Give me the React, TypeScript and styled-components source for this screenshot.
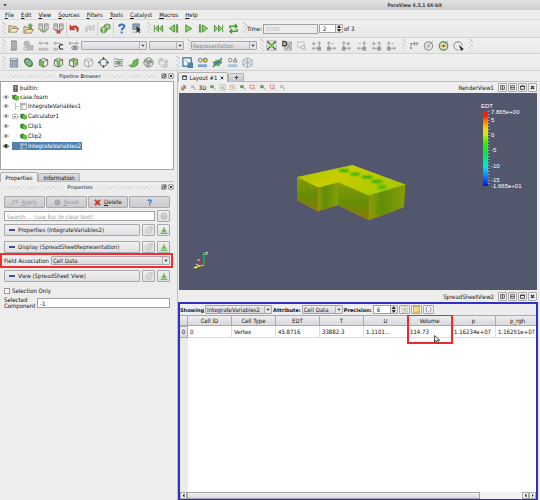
import React from 'react';
import styled, { createGlobalStyle, css } from 'styled-components';

const GlobalStyle = createGlobalStyle`
  *, *::before, *::after { box-sizing: border-box; }
  body { margin: 0; background: #ededed; }
  button, input, select { font: inherit; color: inherit; margin: 0; padding: 0; border-radius: 0; }
`;

const Shell = styled.div`
  display: flex;
  flex-direction: column;
  height: 100vh;
  overflow: hidden;
  background: #ededed;
  color: #111;
  font: 6px/8px "DejaVu Sans Condensed", "Open Sans", sans-serif;
`;

/* ---------- window chrome ---------- */
const TitleBar = styled.header`
  display: flex;
  flex: none;
  align-items: center;
  justify-content: flex-end;
  height: 10px;
  padding: 0 98px 0 3px;
  background: linear-gradient(#e2e2e2, #cecece);
  font: 700 5px/8px "DejaVu Sans Condensed", sans-serif;
  color: #444;
`;
const WindowMenu = styled.button`
  width: 4px;
  height: 3px;
  margin-right: auto;
  border: 0;
  background: #444;
  clip-path: polygon(0 0, 100% 0, 50% 100%);
`;
const MenuBar = styled.nav`
  display: flex;
  flex: none;
  align-items: center;
  gap: 7px;
  height: 10px;
  padding-left: 5px;
  border-bottom: 1px solid #d8d8d8;
`;
const MenuItem = styled.button`
  border: 0;
  background: none;
  line-height: 8px;
  &::first-letter { text-decoration: underline; }
`;
const ToolBar = styled.div<{ $h: number }>`
  display: flex;
  flex: none;
  align-items: center;
  height: ${p => p.$h}px;
  padding-left: 2px;
  border-bottom: 1px solid #d2d2d2;
  background: linear-gradient(#f0f0f0, #e9e9e9);
`;
const Grip = styled.span<{ $gap?: number }>`
  flex: none;
  width: 4px;
  height: 13px;
  margin-left: ${p => p.$gap ?? 0}px;
  background: repeating-linear-gradient(45deg, #cfcfcf 0 1px, transparent 1px 3px);
`;
const Separator = styled.span`
  flex: none;
  width: 1px;
  height: 14px;
  background: #cfcfcf;
`;
const ToolButton = styled.button<{ $w?: number }>`
  display: flex;
  flex: none;
  align-items: center;
  justify-content: center;
  width: ${p => p.$w ?? 15}px;
  height: 13px;
  border: 0;
  background: none;
  svg { display: block; }
`;
const TimeGroup = styled.div`
  display: flex;
  align-items: center;
  gap: 1px;
`;
const field = css`
  border: 1px solid #a2a2a2;
  background: #fff;
  line-height: 8px;
`;
const TextBox = styled.input<{ $w?: number }>`
  ${field}
  min-width: 0;
  width: ${p => (p.$w ? p.$w + 'px' : 'auto')};
  flex: ${p => (p.$w ? 'none' : '1')};
  height: 10px;
  padding: 0 2px;
  &::placeholder { color: #999; opacity: 1; }
  &:disabled { background: #eee; color: #bbb; }
`;
const SpinFrame = styled.span<{ $w: number }>`
  display: flex;
  flex: none;
  width: ${p => p.$w}px;
  height: 9px;
  input { flex: 1; min-width: 0; ${field} padding-left: 3px; height: 9px; line-height: 7px; }
`;
const SpinArrows = styled.span`
  display: flex;
  flex: none;
  flex-direction: column;
  gap: 1px;
  width: 7px;
  border: 1px solid #b0b0b0;
  border-left: 0;
  background: #e4e4e4;
`;
const SpinArrow = styled.button<{ $down?: boolean }>`
  width: 4px;
  height: 3px;
  margin: 0 1px;
  border: 0;
  background: #222;
  clip-path: ${p => (p.$down ? 'polygon(0 0, 100% 0, 50% 100%)' : 'polygon(50% 0, 100% 100%, 0 100%)')};
`;
const Combo = styled.span<{ $w?: number; $muted?: boolean }>`
  display: flex;
  flex: ${p => (p.$w ? 'none' : '1')};
  width: ${p => (p.$w ? p.$w + 'px' : 'auto')};
  height: 9px;
  border: 1px solid #a6a6aa;
  border-radius: 1px;
  background: linear-gradient(#ececef, #d9d9de);
  color: ${p => (p.$muted ? '#888' : '#222')};
  select {
    flex: 1;
    min-width: 0;
    appearance: none;
    border: 0;
    padding-left: 1px;
    background: none;
    line-height: 7px;
  }
  svg { flex: none; border-left: 1px solid #b4b4b8; background: #e6e6e8; }
`;

/* ---------- body ---------- */
const Body = styled.main`
  display: flex;
  flex: 1;
  min-height: 0;
`;
const SideDock = styled.aside`
  display: flex;
  flex: none;
  flex-direction: column;
  width: 178px;
  padding-right: 3px;
  border-right: 1px solid #c0c0c0;
`;
const DockTitle = styled.h2`
  display: flex;
  flex: none;
  align-items: center;
  gap: 3px;
  height: 10px;
  margin: 0;
  padding-left: 2px;
  font: 5px/8px "DejaVu Sans", sans-serif;
  &::before, .fill {
    content: "";
    flex: 1;
    height: 3px;
    background: repeating-linear-gradient(135deg, #d8d8d8 0 1px, transparent 1px 3px);
  }
`;
const FrameButtons = styled.span`
  display: flex;
  gap: 1px;
`;
const FrameButton = styled.button<{ $w?: number }>`
  display: flex;
  flex: none;
  align-items: center;
  justify-content: center;
  width: ${p => p.$w ?? 6}px;
  height: ${p => (p.$w ? 9 : 6)}px;
  border: 1px solid #aaa;
  border-radius: 1px;
  background: #f2f2f2;
  svg { display: block; flex: none; }
`;
const Tree = styled.ul`
  flex: none;
  height: 89px;
  margin: 0;
  padding: 0;
  list-style: none;
  border: 1px solid #a4a4a4;
  background: #fff;
`;
const TreeRow = styled.li<{ $depth: number; $selected?: boolean }>`
  display: flex;
  align-items: center;
  height: 10px;
  margin-bottom: ${p => (p.$depth > 0 ? 0 : -1)}px;
  &:first-child { margin-top: 1px; }
  .eye { width: 8px; margin-left: 1px; flex: none; }
  .node {
    display: flex;
    align-items: center;
    gap: 1px;
    height: 8px;
    margin-left: 2px;
    padding-right: 1px;
    ${p => p.$selected && css`background: #4f81b0; color: #fff;`}
  }
`;
const Tabs = styled.div<{ $gap: number }>`
  display: flex;
  flex: none;
  align-items: flex-end;
  height: ${p => p.$gap}px;
  border-bottom: 1px solid #bcbcbc;
`;
const Tab = styled.button<{ $active?: boolean; $w: number }>`
  display: flex;
  align-items: center;
  justify-content: center;
  gap: 2px;
  width: ${p => p.$w}px;
  height: ${p => (p.$active ? 10 : 8)}px;
  margin-bottom: ${p => (p.$active ? -1 : 0)}px;
  border: 1px solid #b0b0b0;
  border-bottom: 0;
  border-radius: 2px 2px 0 0;
  background: ${p => (p.$active ? '#efefef' : 'linear-gradient(#dfdfe2, #c6c6cc)')};
`;
const PropertyPanel = styled.section`
  display: flex;
  flex-direction: column;
  padding: 4px 4px 0;
`;
const PropRow = styled.div<{ $top?: number; $gap?: number }>`
  display: flex;
  align-items: center;
  gap: ${p => p.$gap ?? 2}px;
  margin-top: ${p => p.$top ?? 0}px;
`;
const PushButton = styled.button<{ $dim?: boolean; $icon?: boolean; $section?: boolean }>`
  display: flex;
  flex: ${p => (p.$icon ? 'none' : '1')};
  align-items: center;
  justify-content: ${p => (p.$section ? 'flex-start' : 'center')};
  gap: 3px;
  width: ${p => (p.$icon ? '13px' : 'auto')};
  height: 12px;
  padding: 0 ${p => (p.$section ? 4 : 0)}px;
  border: 1px solid #a9a9ad;
  border-radius: 1px;
  background: ${p => (p.$section || p.$icon ? 'linear-gradient(#f0f0f1, #e0e0e3)' : 'linear-gradient(#dcdce0, #c9c9ce)')};
  color: ${p => (p.$dim ? '#999' : '#222')};
  white-space: nowrap;
  svg { flex: none; }
`;
const Dash = styled.i`
  width: 6px;
  height: 2px;
  background: #3c4f9c;
`;
const FieldHighlight = styled.div`
  display: flex;
  align-items: center;
  gap: 2px;
  height: 15px;
  margin: 0 -3px 0 -4px;
  padding: 0 1px 0 2px;
  border: 2px solid #f03030;
`;
const CheckLabel = styled.label`
  display: flex;
  align-items: center;
  gap: 2px;
  margin-top: 5px;
  input { appearance: none; width: 6px; height: 6px; border: 1px solid #999; background: #fff; }
`;
const ComponentLabel = styled.label`
  width: 31px;
  line-height: 6px;
`;

/* ---------- views ---------- */
const Workspace = styled.section`
  display: flex;
  flex: 1;
  flex-direction: column;
  min-width: 0;
  padding-right: 2px;
`;
const ViewPane = styled.section`
  display: flex;
  flex: 1 1 0;
  flex-direction: column;
  min-height: 0;
`;
const ViewBar = styled.div`
  display: flex;
  flex: none;
  align-items: center;
  height: 11px;
  padding-right: 1px;
  h3 { margin: 0 4px 0 auto; font: inherit; }
`;
const RenderArea = styled.div`
  flex: 1;
  min-height: 0;
  margin: 0 1px 1px;
  background: #52576e;
  svg { display: block; width: 100%; height: 100%; }
`;
const SheetFrame = styled.div`
  display: flex;
  flex: 1;
  flex-direction: column;
  min-height: 0;
  border: 2px solid #3030c4;
  border-bottom-width: 1px;
  background: #fff;
`;
const SheetBar = styled.div`
  display: flex;
  flex: none;
  align-items: center;
  gap: 1px;
  height: 11px;
  background: #ededed;
  label { font: 700 5px/8px "DejaVu Sans", sans-serif; }
`;
const TableArea = styled.div`
  flex: 1;
  min-height: 0;
  overflow: hidden;
  background: linear-gradient(90deg, #ececec 8px, #fff 8px);
`;
const DataTable = styled.table`
  width: 360px;
  table-layout: fixed;
  border-collapse: separate;
  border-spacing: 0;
  th, td { padding: 0; height: 11px; overflow: visible; white-space: nowrap; }
  th {
    position: relative;
    border: solid #aaaab0;
    border-width: 1px 1px 1px 0;
    background: linear-gradient(#eeeef0, #d9d9de);
    font-weight: 400;
    text-align: center;
  }
  td { padding-left: 2px; border: solid #ddd; border-width: 0 1px 1px 0; }
  tbody th, tbody td { height: 12px; }
`;
const Callout = styled.span`
  position: absolute;
  z-index: 1;
  top: -2px;
  left: -1px;
  width: 46px;
  height: 30px;
  border: 2px solid #f02828;
  svg { position: absolute; left: 25px; top: 19px; }
`;
const ScrollBar = styled.div`
  display: flex;
  flex: none;
  height: 7px;
  background: #f3f3f3;
`;
const ScrollArrow = styled.button<{ $right?: boolean }>`
  display: flex;
  align-items: center;
  justify-content: center;
  width: 7px;
  border: 1px solid #aaa;
  background: #efefef;
  &::before {
    content: "";
    width: 2px;
    height: 4px;
    background: #222;
    clip-path: ${p => (p.$right ? 'polygon(0 0, 100% 50%, 0 100%)' : 'polygon(100% 0, 100% 100%, 0 50%)')};
  }
`;
const ScrollTrack = styled.div`
  flex: 1;
  padding-right: 42px;
  span {
    display: block;
    height: 7px;
    border: 1px solid #a5a5a9;
    background: linear-gradient(#f3f3f5, #d8d8dc);
  }
`;

/* ---------- icons ---------- */
const G = '#6fbf45';
const D = '#3b6e28';
const S = '#a8a8a8';
const frame = (d: string) => (
  <g fill="none" stroke={d}>
    <path d="M1.500 3.500 6 1.500l4.500 1.500v5.500L6 11l-4.500-2zM1.500 3.500 6 5l4.500-2M6 5v6" />
  </g>
);
const arrows = (flip: boolean, mark: string) => (
  <g fill="none" stroke="#999" strokeWidth="1">
    <path d={flip ? 'M3 11V2M1.500 4 3 2l1.500 2M3 9h7M8.500 7.500 10.500 9l-2 2' : 'M9 11V2M7.500 4 9 2l1.500 2M9 9H2M3.500 7.500 1.500 9l2 2'} />
    {mark === '-' ? <path d={flip ? 'M6 4h2' : 'M3 4h2'} /> : <path d={flip ? 'M6 4h4M8 2v4' : 'M1 4h4M3 2v4'} />}
    <rect x={flip ? 1.5 : 7.5} y="8" width="3" height="3" fill="#999" />
  </g>
);
const shapes: Record<string, React.ReactNode> = {
  open: <g stroke="#7b6a45" strokeWidth=".8"><path d="M1 10V3h3l1 1h4v2" fill="#e9d9a8" /><path d="M1 10 4 6h7.500L9 10z" fill="#f9efca" /></g>,
  save: <g stroke="#7b6a45" strokeWidth=".8"><path d="M1 11V4h3l1 1h4v2" fill="#e9d9a8" /><path d="M1 11 4 7h7.500L9 11z" fill="#f3e3b0" /><path d="M7 6V3H5.500L8 .5l2.500 2.500H9v3z" fill={G} stroke={D} strokeWidth=".5" /></g>,
  connect: <g fill="#d6ddd0" stroke="#777" strokeWidth=".8"><rect x="1" y="1" width="4" height="6" /><rect x="7" y="1" width="4" height="6" /><path d="M2 3h2M8 3h2M3 7v2h6V7" /><path d="M4 9h4M6 7v4" stroke={G} strokeWidth="1.500" /></g>,
  disconnect: <g fill="#ddd5d0" stroke="#777" strokeWidth=".8"><rect x="1" y="1" width="4" height="6" /><rect x="7" y="1" width="4" height="6" /><path d="M2 3h2M8 3h2M3 7v2h6V7" /><path d="m4 7.500 4 4M8 7.500l-4 4" stroke="#c33" strokeWidth="1.400" /></g>,
  undo: <path d="M1 2v5.500h5.500L4.600 5.800C7 4.300 9 6 8.800 10 12.800 5.500 8.500 1 2.800 4z" fill="#d93a2b" stroke="#9c2016" strokeWidth=".5" />,
  redo: <path d="M11 2v5.500H5.500l1.900-1.700C5 4.300 3 6 3.200 10-.8 5.500 3.500 1 9.200 4z" fill="#ddd" stroke={S} strokeWidth=".7" />,
  cubes: <g fill={G} stroke={D} strokeWidth=".7"><path d="M5 2 8 1l3 1v4L8 7 5 6z" fill="#a4c890" /><path d="M1 5l3-1 3 1v4.500L4 11 1 9.500z" /><path d="m1 5 3 1 3-1M4 6v5" fill="none" stroke="#fff" /></g>,
  help: <g fill="none" stroke="#2676c4" strokeWidth="2.200"><path d="M3.500 4C3.500 .8 9 .8 9 3.800 9 5.800 6.200 5.500 6.200 8" /><path d="M6.200 9.300v2" /></g>,
  probe: <g><rect x="2" y="1" width="7" height="6" fill="#82a9cd" stroke="#666" strokeWidth=".7" /><path d="M6 3v8l1.700-1.600L9 11l1-.5L9 8h2z" fill="#333" /><path d="M2 10h3" stroke="#888" /></g>,
  first: <g fill="#8ad26c" stroke="#3f8a2a" strokeWidth=".9"><path d="M1.500 2v8M6 2.500v7L2.500 6zM10.500 2.500v7L7 6z" /></g>,
  prev: <g fill="#8ad26c" stroke="#3f8a2a" strokeWidth=".9"><path d="M7 2v8L1.500 6zM9 2h1.500v8H9z" /></g>,
  play: <path d="M3 2v8l6.500-4z" fill="#8ad26c" stroke="#3f8a2a" strokeWidth=".9" />,
  next: <g fill="#8ad26c" stroke="#3f8a2a" strokeWidth=".9"><path d="M5 2v8l5.500-4zM1.500 2H3v8H1.500z" /></g>,
  last: <g fill="#8ad26c" stroke="#3f8a2a" strokeWidth=".9"><path d="M10.500 2v8M6 2.500v7L9.500 6zM1.500 2.500v7L5 6z" /></g>,
  loop: <g fill="none" stroke="#4f9c37" strokeWidth="1.600"><path d="M2 6V3.500h7M7.500 1l2.300 2.500L7.500 6M10 6.500V9H3M4.500 6.500 2.200 9l2.300 2.500" /></g>,
  legend: <g><rect x="4" y="1" width="5" height="10" fill="#a5a5a5" stroke="#777" strokeWidth=".7" /><path d="M4 3.500h5M4 6h5M4 8.500h5" stroke="#ccc" strokeWidth=".6" /></g>,
  color: <g fill="#bbb" stroke={S} strokeWidth=".7"><circle cx="4" cy="4" r="3" /><path d="M5 6h6v5H5z" /><path d="M1 8h4v3H1z" fill="#ddd" /></g>,
  range: <g fill="none" stroke="#999"><path d="M1 3.500h10M3 2 1 3.500 3 5M9 2l2 1.500L9 5" /><path d="M1 9h10v2H1z" fill="#ccc" stroke={S} strokeWidth=".6" /></g>,
  rangeC: <g fill="none" stroke="#999"><path d="M1 3.500h8M3 2 1 3.500 3 5" /><path d="M1 9h4v2H1z" fill="#ccc" strokeWidth=".6" /><path d="M11 5.500c-3-1.500-5 1-4 3 .7 1.800 2.500 2 4 1" stroke="#333" strokeWidth="1.300" /></g>,
  rangeEye: <g fill="none" stroke="#999"><path d="M1 3.500h10M3 2 1 3.500 3 5M9 2l2 1.500L9 5" /><ellipse cx="7.500" cy="8.500" rx="3.500" ry="2" stroke="#666" /><circle cx="7.500" cy="8.500" r="1.200" fill="#444" /></g>,
  reset: <g><rect x="1" y="1" width="10" height="10" fill="#dde8d8" stroke="#888" strokeWidth=".6" /><path d="m1.500 1.500 3 3M10.500 1.500l-3 3M1.500 10.500l3-3M10.500 10.500l-3-3" stroke="#333" strokeWidth="1.200" /><rect x="4" y="4" width="4" height="4" fill={G} /></g>,
  zoomD: <g><rect x="4" y="2" width="7.500" height="9" fill="#ccc" stroke="#999" strokeWidth=".6" /><path d="m6 10 5-7M6 4l5 6" stroke="#888" /><path d="M2 1.500v5h1.500c3.500 0 3.500-5 0-5z" fill="none" stroke="#333" strokeWidth="1.300" /></g>,
  zoomBox: <g fill="none" stroke="#aaa"><path d="M2 2h7v5M2 2v6h3" strokeDasharray="1.500 1" /><circle cx="7.500" cy="8" r="2" /><path d="m9 9.500 2 2" /></g>,
  px: arrows(false, '+'), mx: arrows(true, '-'), py: arrows(true, '+'), my: arrows(false, '-'), pz: arrows(false, '+'), mz: arrows(true, '-'),
  axes: <g stroke="#888" fill="none"><path d="M3.500 10V4M2 8l1.500 2M2 4h9M9 2l2 2-2 2M7 2v4" /></g>,
  rotate: <g fill="none" stroke="#999"><circle cx="6" cy="6.500" r="4.500" strokeWidth="1.300" /><circle cx="6" cy="6.500" r="1.500" /><path d="M7 5 11 1" /></g>,
  rotateOn: <g fill="none" stroke="#6e9550"><circle cx="6" cy="6.500" r="4.500" strokeWidth="1.600" /><path d="M3 6.500h6M6 3.500v6" stroke="#d2a52d" strokeWidth="1.500" /><circle cx="6" cy="6.500" r="1" fill="#b33" stroke="none" /><path d="M7.500 4.500 11 1" /></g>,
  pick: <g fill="none" stroke="#999"><path d="M6 11A4.500 4.500 0 1 1 10 6" strokeWidth="1.200" /><path d="m7 6 4.500 4-2 .3-.5 1.500z" fill="#222" stroke="#222" strokeWidth=".5" /></g>,
  calc: <g><rect x="2" y="1" width="9" height="10.500" fill="#8591a0" /><path d="M3 2.500h7" stroke="#dce6f0" strokeWidth="1.500" /><path d="M3 5.500h7M3 7.500h7M3 9.500h7" stroke="#dfe5ea" strokeDasharray="1.300 .8" /></g>,
  contour: <g><ellipse cx="6" cy="6" rx="5.300" ry="3.600" transform="rotate(45 6 6)" fill="#4b9b3a" stroke="#3d6a3f" strokeWidth=".7" /><ellipse cx="6" cy="6" rx="3" ry="1.600" transform="rotate(45 6 6)" fill="#68a2c8" stroke="#cde7c0" strokeWidth=".7" /></g>,
  clip: <g>{frame('#666')}<path d="M2 4l4 1v5.500L2 9z" fill={G} /></g>,
  slice: <g>{frame('#666')}<path d="M4 2.500 8 4v6L4 9z" fill={G} /></g>,
  threshold: <g>{frame('#666')}<path d="M2 3.500 6 2l4 1-4 2zM7 6l3-1v3L7 9z" fill={G} /></g>,
  extract: frame('#aaa'),
  glyph: <g fill="none" stroke="#777"><circle cx="6" cy="6" r="4" strokeWidth="1.200" /><path d="M6 0v3M6 9v3M0 6h3M9 6h3" stroke="#4c5d66" strokeWidth="1.400" /></g>,
  stream: <g fill="none" stroke="#777"><path d="M1 2.500c3-2 4 2 10 0M1 10c3 2 4-2 10 0M1 5h3M1 7.500h3M8 5h3M8 7.500h3" /><circle cx="6" cy="6.200" r="1.800" fill={G} /></g>,
  warp: <path d="M1 9c4 0 4-1.500 5-5l5-2v5c-1 3-4 4-7 4z" fill="#70bc4b" stroke={D} strokeWidth=".6" />,
  group: <g fill="#b8d6aa" stroke="#777"><circle cx="6" cy="6" r="5" fill="none" /><circle cx="4" cy="4.500" r="1.500" /><circle cx="8" cy="5" r="1.500" fill={G} /><circle cx="5.500" cy="8.300" r="1.500" /></g>,
  extractGroup: <g fill="#ddd" stroke="#aaa"><path d="M2 2a5 5 0 0 0 3 8" fill="none" /><circle cx="4" cy="3" r="1.500" /><circle cx="9" cy="5" r="1.500" /><circle cx="8" cy="9.500" r="2" /></g>,
  selSurface: <g><rect x="1" y="1" width="9" height="9" fill="#f3f9ff" stroke="#37799e" strokeWidth="1.400" /><path d="M6 6h6v6H6z" fill="#4687ae" /><path d="m3 3 4 4" stroke={G} /></g>,
  selPoint: <g fill="none" stroke="#666"><circle cx="3.500" cy="3.500" r="2" /><circle cx="9" cy="3.500" r="2.200" fill="#e5c82e" /><path d="M1 9.500h10" stroke="#78a6cc" strokeWidth="3" /></g>,
  plot: <g><path d="M1 9 4 3h7L8 10z" fill="#6ab148" /><path d="M1 11 11 1M1 6h10" stroke="#4a789a" strokeWidth="1.400" /></g>,
  selCell: <g fill="none" stroke="#888"><circle cx="3.500" cy="3.500" r="2" /><path d="M7 5.500 9 1l2 4.500z" fill="#cdb" /><path d="M1 9.500h10" stroke="#a5c5e0" strokeWidth="3" /></g>,
  snow: <g fill="none" stroke="#9aaebb"><path d="m6 .8 5 2.500v5.500L6 11.500 1 8.800V3.300zM6 1v10M1.500 3.500l9 5M10.500 3.500l-9 5" /></g>,
  source: <g><path d="M1 2 5 1l3 1v7l-3 1-4-1.500z" fill="#3f8f2b" /><path d="m4 4 4-1 4 1v6l-4 1.500L4 10z" fill="#62c23c" /><path d="M4 4v6M1 2v6" stroke="#2c6220" /></g>,
  server: <g><rect x="3" y="1" width="6" height="10" fill="#666" stroke="#222" /><path d="M4.500 3h3M4.500 5h3" stroke="#eee" /><circle cx="6" cy="8.500" r="1" fill="#ddd" /></g>,
  sheet: <g fill="#fff" stroke="#888"><rect x="1" y="1" width="10" height="10" /><path d="M1 3h10M3.500 1v10" stroke="#9a9a8a" strokeWidth="1.500" /></g>,
  sheetOn: <g fill="#5b86b0" stroke="#a9b7c2"><rect x="1" y="1" width="10" height="10" /><path d="M1 3h10M3.500 1v10" stroke="#c9cdc8" strokeWidth="1.500" /></g>,
  branch: <path d="M6 0v12M6 6h6" fill="none" stroke="#bbb" strokeWidth="1.500" />,
  minus: <g fill="#fff" stroke="#999"><path d="M5 0v3M10 6h2" strokeWidth="1.500" /><rect x="1" y="3" width="8" height="7" /><path d="M3 6.500h4" stroke="#444" strokeWidth="1.500" /></g>,
  eye: <g fill="none" stroke="#888"><path d="M0 6.500c3-4.500 9-4.500 12 0-3 4-9 4-12 0z" /><circle cx="6" cy="6" r="2.200" fill="#555" /></g>,
  eyeOn: <g fill="none" stroke="#222" strokeWidth="1.400"><path d="M0 6.500c3-4.500 9-4.500 12 0-3 4-9 4-12 0z" /><circle cx="6" cy="6" r="2.400" fill="#111" /></g>,
  window: <path d="M1.500 2.500h9v8h-9zM1 3h10" fill="#fff" stroke="#222" strokeWidth="2" />,
  splitH: <path d="M1.500 1.500h9v9h-9zM6 2v8" fill="none" stroke="#333" strokeWidth="1.800" />,
  splitV: <path d="M1.500 1.500h9v9h-9zM2 6h8" fill="none" stroke="#333" strokeWidth="1.800" />,
  close: <path d="m2 2 8 8M10 2l-8 8" stroke="#222" strokeWidth="2.800" />,
  float: <path d="M4 1h7v7H8M1 4h7v7H1z" fill="none" stroke="#222" strokeWidth="2" />,
  delete: <path d="m1 3 2-2 3 3 3-3 2 2-3 3 3 3-2 2-3-3-3 3-2-2 3-3z" fill="#df3b2b" stroke="#9e2015" strokeWidth=".6" />,
  disc: <g><circle cx="6" cy="6" r="5" fill="#a6a6aa" /><path d="m3 3 6 6" stroke="#d5d5d5" /></g>,
  apply: <g fill="none" stroke="#aaa"><path d="M1 10c0-6 3-7 9-6M7 1.500 10.500 4 7 7" strokeWidth="1.500" /><circle cx="3" cy="4" r="1.700" /></g>,
  plus: <path d="M6 2v8M2 6h8" stroke="#444" strokeWidth="2.500" />,
  copy: <g fill="none" stroke="#aaa"><circle cx="5.500" cy="6.500" r="4.500" /><path d="M3 8 8 4M5 9l3-3M7 1h4v4" /></g>,
  restore: <g><path d="m6 .5 1.200 4L10 8.500H2l2.800-4z" fill="#5aac38" /><path d="M1 10.800h10" stroke="#4e9a35" strokeWidth="1.500" /><path d="M6 4v3" stroke="#b7e39e" /></g>,
  gear: <g fill="none" stroke="#999"><circle cx="6" cy="6" r="4" strokeDasharray="2 1" strokeWidth="1.800" /><circle cx="6" cy="6" r="1" /></g>,
  camR: <g><path d="M2 6h5v5H2z" fill="#b58a74" /><path d="M5 2h5v6H7z" fill="#8b8378" /><path d="M2 7 6 3" stroke="#c44" /></g>,
  camS: <g fill="#bbb"><path d="M2 2h5v5H2z" /><path d="m6 6 4 4M8 5v5" stroke="#999" /></g>,
  selG: <g><rect x="1.500" y="1.500" width="9" height="9" fill="#f4f4ee" stroke="#aaa" /><path d="m5 5 5 5M5 5v4M5 5h4" stroke={G} strokeWidth="1.300" /></g>,
  selR: <g fill="none"><path d="M2 2h8v8H2z" stroke="#999" strokeDasharray="2 1" /><path d="M3 4h3v4" stroke="#e09a45" strokeWidth="1.500" /></g>,
  selB: <g><path d="M2 2h6v5H2z" fill="#62a64a" /><path d="m6 5 5 5" stroke="#888" strokeWidth="1.500" /></g>,
  selO: <g fill="none"><path d="M2 2h7v6H2z" stroke="#cf6d54" strokeWidth="1.500" strokeDasharray="2 1" /><path d="m6 5 5 5" stroke="#999" /></g>,
  braces: <path d="M4 1C1.500 1 3.500 6 1 6c2.500 0 .5 5 3 5M8 1c2.500 0 .5 5 3 5-2.500 0-.5 5-3 5M5 9h2" fill="none" stroke="#666" />,
  yellow: <g><rect x="1" y="1" width="10" height="10" fill="#efc84a" stroke="#c19828" /><path d="M1 4h10M1 7h10M5 1v10" stroke="#fff2b8" /></g>,
};
const Icon = ({ name, size = 12 }: { name: string; size?: number }) => (
  <svg width={size} height={size} viewBox="0 0 12 12" aria-hidden="true">{shapes[name]}</svg>
);
const Tools = ({ names, w }: { names: string[]; w?: number }) => (
  <>{names.map((n, i) => (
    <ToolButton key={n + i} $w={w} aria-label={n}><Icon name={n} size={w ? 7 : 11} /></ToolButton>
  ))}</>
);
const Spin = ({ id, w, label, value }: { id: string; w: number; label: string; value: string }) => (
  <SpinFrame $w={w}>
    <input id={id} defaultValue={value} aria-label={label} />
    <SpinArrows><SpinArrow aria-label="Increase" /><SpinArrow $down aria-label="Decrease" /></SpinArrows>
  </SpinFrame>
);
const Select = ({ id, w, label, value, muted }: { id: string; w?: number; label?: string; value: string; muted?: boolean }) => (
  <Combo $w={w} $muted={muted}>
    <select id={id} aria-label={label}><option>{value}</option></select>
    <svg width="7" height="7" viewBox="0 0 7 7" aria-hidden="true"><path d="M1.500 2.500h4L3.500 5z" fill="#333" /></svg>
  </Combo>
);
const DockHeader = ({ title }: { title: string }) => (
  <DockTitle>
    {title}<span className="fill" />
    <FrameButtons>
      <FrameButton aria-label="Float"><Icon name="float" size={4} /></FrameButton>
      <FrameButton aria-label="Close"><Icon name="close" size={4} /></FrameButton>
    </FrameButtons>
  </DockTitle>
);
const ViewButtons = () => (
  <FrameButtons>
    {['splitH', 'splitV', 'window', 'close'].map(n => (
      <FrameButton $w={9} key={n} aria-label={n}><Icon name={n} size={5} /></FrameButton>
    ))}
  </FrameButtons>
);

/* ---------- 3D scene ---------- */
const ticks: [string, number][] = [['5', 120], ['0', 135], ['-5', 150], ['-10', 166], ['-15', 180]];
const Scene = () => (
  <svg viewBox="179 93 358 197" role="img" aria-label="EDT field on geometry">
    <defs>
      <linearGradient id="bar" x1="0" y1="0" x2="0" y2="1">
        <stop offset="0" stopColor="#ff1010" /><stop offset=".07" stopColor="#ff2000" />
        <stop offset=".14" stopColor="#ff8000" /><stop offset=".24" stopColor="#ffd800" /><stop offset=".32" stopColor="#c6f000" />
        <stop offset=".42" stopColor="#35ee00" /><stop offset=".58" stopColor="#00e850" />
        <stop offset=".74" stopColor="#00e6e6" /><stop offset=".87" stopColor="#0080ff" /><stop offset="1" stopColor="#0010ee" />
      </linearGradient>
      <linearGradient id="top" x1="0" y1="0" x2="1" y2=".5">
        <stop offset="0" stopColor="#a5c400" /><stop offset=".45" stopColor="#c8cd00" /><stop offset="1" stopColor="#a9ca00" />
      </linearGradient>
      <linearGradient id="side" x1="0" y1="0" x2="0" y2="1">
        <stop offset="0" stopColor="#879c07" /><stop offset=".55" stopColor="#668c05" /><stop offset="1" stopColor="#8b7a05" />
      </linearGradient>
      <linearGradient id="side2" x1="0" y1="0" x2="1" y2="0">
        <stop offset="0" stopColor="#8c9c06" /><stop offset=".35" stopColor="#5f8f08" /><stop offset="1" stopColor="#889d06" />
      </linearGradient>
      <filter id="soft"><feGaussianBlur stdDeviation=".8" /></filter>
    </defs>
    <path d="M297 177v23l21 11v-24z" fill="url(#side)" />
    <path d="M318 187v24l20-6v-23z" fill="url(#side2)" />
    <path d="M338 182v23l31 15v-25z" fill="url(#side)" />
    <path d="M369 195v25l35-13 1.500-23z" fill="url(#side2)" />
    <path d="m297 177 55.500-12 53 19.500-37 11-30-13-20.500 5z" fill="url(#top)" />
    <g fill="#28ae12" filter="url(#soft)">
      <ellipse cx="344" cy="170.500" rx="5" ry="1.500" /><ellipse cx="355" cy="174" rx="5" ry="1.500" />
      <ellipse cx="367" cy="177" rx="5.500" ry="1.500" /><ellipse cx="377" cy="181.500" rx="6" ry="1.500" />
      <ellipse cx="382" cy="187" rx="5" ry="1.800" opacity=".7" />
    </g>
    <path d="m297 200 21 11v-24M318 211l20-6 31 15 35-13M369 195v25" fill="none" stroke="#b08010" strokeWidth=".6" />
    <rect x="483" y="111" width="5" height="75" fill="url(#bar)" />
    <path d="M488.500 111v75" stroke="#ddd" strokeWidth="2" strokeDasharray=".5 2.500" />
    <g fill="#fff" fontFamily="Liberation Sans, sans-serif" fontSize="6">
      <text x="481" y="108">EDT</text>
      <text x="491" y="114">7.865e+00</text>
      {ticks.map(([t, y]) => <text key={t} x="491" y={y + 2}>{t}</text>)}
      <text x="491" y="188">-1.665e+01</text>
      <text x="205" y="255">z</text>
    </g>
    <g fill="none" strokeWidth="1">
      <path d="M204 265v-11" stroke="#25c545" /><path d="m204 252-1.500 3h3z" fill="#25e545" />
      <path d="m204 265-6-4" stroke="#c33" strokeWidth="1.500" /><path d="m204 265-9 2.500" stroke="#dede30" />
      <path d="m193 268 4-2.500v3z" fill="#f0f020" /><path d="m197 260 3 0M196 264l4 2" stroke="#ddd" />
    </g>
  </svg>
);

const nodes = [
  { t: 'builtin:', d: 0, b: '', i: 'server', e: '' }, { t: 'case.foam', d: 0, b: '', i: 'source', e: 'eye' },
  { t: 'IntegrateVariables1', d: 1, b: 'branch', i: 'sheet', e: 'eye' }, { t: 'Calculator1', d: 1, b: 'minus', i: 'source', e: 'eye' },
  { t: 'Clip1', d: 1, b: 'none', i: 'source', e: 'eye' }, { t: 'Clip2', d: 1, b: 'none', i: 'source', e: 'eye' },
  { t: 'IntegrateVariables2', d: 1, b: 'none', i: 'sheetOn', e: 'eyeOn' },
];
const columns = [['Cell ID', '0'], ['Cell Type', 'Vertex'], ['EDT', '45.8716'], ['T', '33882.3'], ['U', '1.1101...'], ['Volume', '114.73'], ['p', '1.16234e+07'], ['p_rgh', '1.16251e+07']];

const Section = ({ title, top }: { title: string; top: number }) => (
  <PropRow $top={top}>
    <PushButton $section><Dash />{title}</PushButton>
    <PushButton $icon aria-label="Copy"><Icon name="copy" size={8} /></PushButton>
    <PushButton $icon aria-label="Restore"><Icon name="restore" size={8} /></PushButton>
  </PropRow>
);

export default function App() {
  return (
    <Shell>
      <GlobalStyle />
      <TitleBar><WindowMenu aria-label="Window menu" />ParaView 4.3.1 64-bit</TitleBar>
      <MenuBar>
        {['File', 'Edit', 'View', 'Sources', 'Filters', 'Tools', 'Catalyst', 'Macros', 'Help'].map(m => <MenuItem key={m}>{m}</MenuItem>)}
      </MenuBar>
      <ToolBar $h={18}>
        <Grip />
        <Tools names={['open', 'save', 'connect', 'disconnect']} /><Separator />
        <Tools names={['undo', 'redo']} /><Separator />
        <Tools names={['cubes']} /><Separator />
        <Tools names={['help', 'probe']} /><Grip $gap={3} />
        <Tools names={['first', 'prev', 'play', 'next', 'last', 'loop']} /><Grip $gap={2} />
        <TimeGroup>
          <label htmlFor="time">Time:</label>
          <TextBox id="time" $w={55} disabled defaultValue="6000" />
          <Spin id="step" label="Time step" w={24} value="2" />
          <span>of 3</span>
        </TimeGroup>
      </ToolBar>
      <ToolBar $h={16}>
        <Grip />
        <Tools names={['legend', 'color', 'range', 'rangeC', 'rangeEye']} />
        <Select id="array" label="Array" w={66} value="" />&nbsp;
        <Select id="comp" label="Component" w={35} value="" />
        <Grip $gap={3} />
        <Select id="rep" label="Representation" w={66} value="Representation" muted />
        <Grip $gap={3} />
        <Tools names={['reset', 'zoomD', 'zoomBox', 'px', 'mx', 'py', 'my', 'pz', 'mz']} />
        <Grip $gap={3} />
        <Tools names={['axes', 'rotate', 'rotateOn', 'pick']} />
        <Grip $gap={3} />
      </ToolBar>
      <ToolBar $h={17}>
        <Grip />
        <Tools names={['calc', 'contour', 'clip', 'slice', 'threshold', 'extract', 'glyph', 'stream', 'warp', 'group', 'extractGroup']} />
        <Grip $gap={5} />
        <Tools names={['selSurface', 'selPoint', 'plot', 'selCell', 'snow']} />
      </ToolBar>
      <Body>
        <SideDock>
          <DockHeader title="Pipeline Browser" />
          <Tree>
            {nodes.map(n => (
              <TreeRow key={n.t} $depth={n.d} $selected={n.e === 'eyeOn'}>
                <svg className="eye" width="6" height="6" viewBox="0 0 12 12" aria-hidden="true">{n.e && shapes[n.e]}</svg>
                <span className="node">{n.b && <Icon name={n.b} size={7} />}<Icon name={n.i} size={7} />{n.t}</span>
              </TreeRow>
            ))}
          </Tree>
          <Tabs $gap={12}>
            <Tab $active $w={38}>Properties</Tab><Tab $w={42}>Information</Tab>
          </Tabs>
          <DockHeader title="Properties" />
          <PropertyPanel>
            <PropRow $gap={1}>
              <PushButton $dim><Icon name="apply" size={7} /><span><u>A</u>pply</span></PushButton>
              <PushButton $dim><Icon name="disc" size={7} /><span><u>R</u>eset</span></PushButton>
              <PushButton><Icon name="delete" size={7} /><span><u>D</u>elete</span></PushButton>
              <PushButton aria-label="Help"><Icon name="help" size={7} /></PushButton>
            </PropRow>
            <PropRow $top={2}>
              <TextBox aria-label="Search" placeholder="Search ... (use Esc to clear text)" />
              <PushButton $icon aria-label="Advanced"><Icon name="gear" size={8} /></PushButton>
            </PropRow>
            <Section title="Properties (IntegrateVariables2)" top={2} />
            <Section title="Display (SpreadSheetRepresentation)" top={5} />
            <FieldHighlight>
              <label htmlFor="assoc">Field Association</label>
              <Select id="assoc" value="Cell Data" />
            </FieldHighlight>
            <Section title="View (SpreadSheet View)" top={2} />
            <CheckLabel><input type="checkbox" />Selection Only</CheckLabel>
            <PropRow $top={2}>
              <ComponentLabel htmlFor="selcomp">Selected Component</ComponentLabel>
              <TextBox id="selcomp" defaultValue="-1" />
            </PropRow>
          </PropertyPanel>
        </SideDock>
        <Workspace>
          <Tabs $gap={11}>
            <Tab $active $w={50}><Icon name="window" size={5} />Layout #1<Icon name="close" size={4} /></Tab>
            <Tab $w={16} aria-label="New layout"><Icon name="plus" size={5} /></Tab>
          </Tabs>
          <ViewPane>
            <ViewBar>
              <Tools w={10} names={['camR', 'camS']} />
              <ToolButton $w={9}>3D</ToolButton>
              <Tools w={10} names={['selB', 'selG', 'selR', 'selB', 'selO', 'selB', 'selO', 'camS']} />
              <h3>RenderView1</h3><ViewButtons />
            </ViewBar>
            <RenderArea><Scene /></RenderArea>
          </ViewPane>
          <ViewPane>
            <ViewBar><h3>SpreadSheetView2</h3><ViewButtons /></ViewBar>
            <SheetFrame>
              <SheetBar>
                <label htmlFor="showing">Showing</label><Select id="showing" w={67} value="IntegrateVariables2" />
                <label htmlFor="attr">Attribute:</label><Select id="attr" w={41} value="Cell Data" />
                <label htmlFor="precision">Precision:</label><Spin id="precision" label="Precision" w={25} value="6" />
                {['selG', 'yellow', 'braces'].map(n => <FrameButton key={n} $w={11} aria-label={n}><Icon name={n} size={7} /></FrameButton>)}
              </SheetBar>
              <TableArea>
                <DataTable>
                  <colgroup><col width="8" />{columns.map(c => <col key={c[0]} width="44" />)}</colgroup>
                  <thead>
                    <tr>
                      <th aria-label="Row" />
                      {columns.map(c => (
                        <th key={c[0]}>{c[0]}{c[0] === 'Volume' && (
                          <Callout>
                            <svg width="7" height="9" viewBox="0 0 7 9"><path d="M.5.500v6.500l1.700-1.500 1.300 3 1.200-.6-1.300-2.700h2.400z" fill="#fff" stroke="#222" strokeWidth=".8" /></svg>
                          </Callout>
                        )}</th>
                      ))}
                    </tr>
                  </thead>
                  <tbody><tr><th>0</th>{columns.map(c => <td key={c[0]}>{c[1]}</td>)}</tr></tbody>
                </DataTable>
              </TableArea>
              <ScrollBar>
                <ScrollArrow aria-label="Scroll left" />
                <ScrollTrack><span /></ScrollTrack>
                <ScrollArrow aria-label="Scroll left" /><ScrollArrow $right aria-label="Scroll right" />
              </ScrollBar>
            </SheetFrame>
          </ViewPane>
        </Workspace>
      </Body>
    </Shell>
  );
}
